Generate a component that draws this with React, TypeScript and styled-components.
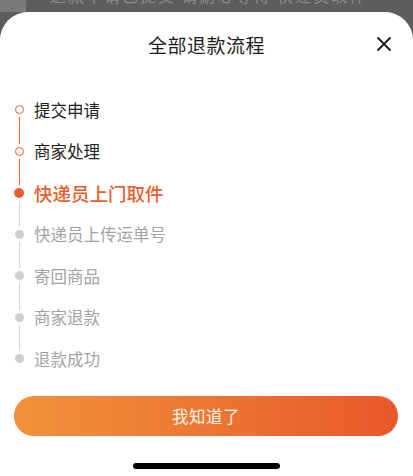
import React from "react";
import styled, { createGlobalStyle } from "styled-components";

const GlobalStyle = createGlobalStyle`
  html, body {
    margin: 0;
    padding: 0;
    background: #5d5d5d;
    font-family: "Noto Sans CJK SC", "Noto Sans", sans-serif;
  }
  #root {
    width: 413px;
    height: 476px;
    overflow: hidden;
  }
`;

const ORANGE = "#e8612c";
const GRAY_DOT = "#cfcfcf";
const GRAY_LINE = "#d6d6d6";

const Backdrop = styled.div`
  height: 12px;
  display: flex;
  overflow: hidden;
`;

const BackdropEdge = styled.div`
  width: 26px;
  background: #7a7a7a;
`;

const BackdropText = styled.div`
  flex: 1;
  margin-top: -14px;
  padding-left: 24px;
  font-size: 16px;
  line-height: 18px;
  color: #8c8c8c;
  letter-spacing: 2px;
  white-space: nowrap;
`;

const Sheet = styled.div`
  height: 464px;
  background: #fff;
  border-radius: 28px 28px 0 0;
  display: flex;
  flex-direction: column;
`;

const Header = styled.div`
  height: 64px;
  display: grid;
  grid-template-columns: 1fr auto 1fr;
  align-items: center;
`;

const Title = styled.div`
  grid-column: 2;
  font-size: 19px;
  color: #1c1c1c;
  letter-spacing: 0.5px;
`;

const CloseButton = styled.button`
  justify-self: end;
  margin-right: 21px;
  width: 16px;
  height: 16px;
  padding: 0;
  border: none;
  background: none;
  display: flex;
  align-items: center;
  justify-content: center;
`;

const Steps = styled.div`
  padding: 13px 0 0 14px;
  display: flex;
  flex-direction: column;
`;

const StepRow = styled.div`
  height: 41.5px;
  display: flex;
  align-items: stretch;
`;

const Rail = styled.div`
  width: 10px;
  display: flex;
  flex-direction: column;
  align-items: center;
`;

const Segment = styled.div<{ $color: string }>`
  flex: 1;
  width: 1px;
  background: ${({ $color }) => $color};
`;

const Dot = styled.div<{ $state: "done" | "active" | "todo" }>`
  box-sizing: border-box;
  flex: none;
  margin: 3px 0;
  border-radius: 50%;
  width: ${({ $state }) => ($state === "active" ? "10px" : "9px")};
  height: ${({ $state }) => ($state === "active" ? "10px" : "9px")};
  background: ${({ $state }) =>
    $state === "active" ? ORANGE : $state === "todo" ? GRAY_DOT : "#fff"};
  border: ${({ $state }) => ($state === "done" ? `1.4px solid ${ORANGE}` : "none")};
`;

const StepLabel = styled.div<{ $state: "done" | "active" | "todo" }>`
  margin-left: 10px;
  display: flex;
  align-items: center;
  white-space: nowrap;
  font-size: ${({ $state }) => ($state === "active" ? "18.5px" : "16.5px")};
  font-weight: ${({ $state }) => ($state === "active" ? 500 : 400)};
  color: ${({ $state }) =>
    $state === "active" ? ORANGE : $state === "todo" ? "#a3a3a3" : "#222"};
`;

const Footer = styled.div`
  padding: 16px 15px 0 14px;
`;

const ConfirmButton = styled.button`
  width: 100%;
  height: 40px;
  border: none;
  border-radius: 20px;
  background: linear-gradient(90deg, #f0923a 0%, #ec7733 50%, #e8582a 100%);
  color: #fff4e8;
  font-family: inherit;
  font-size: 16.5px;
  letter-spacing: 0.5px;
`;

const HomeBar = styled.div`
  margin: 27px auto 0;
  width: 147px;
  height: 6px;
  border-radius: 3px;
  background: #000;
`;

const steps = [
  "提交申请",
  "商家处理",
  "快递员上门取件",
  "快递员上传运单号",
  "寄回商品",
  "商家退款",
  "退款成功",
];

const activeIndex = 2;

export default function App() {
  return (
    <>
      <GlobalStyle />
      <Backdrop>
        <BackdropEdge />
        <BackdropText>退款申请已提交 请耐心等待 快递员取件</BackdropText>
      </Backdrop>
      <Sheet>
        <Header>
          <Title>全部退款流程</Title>
          <CloseButton aria-label="关闭">
            <svg width="14" height="14" viewBox="0 0 14 14">
              <path d="M1 1L13 13M13 1L1 13" stroke="#1a1a1a" strokeWidth="1.8" strokeLinecap="round" />
            </svg>
          </CloseButton>
        </Header>
        <Steps>
          {steps.map((label, i) => {
            const state = i < activeIndex ? "done" : i === activeIndex ? "active" : "todo";
            const topColor = i === 0 ? "transparent" : i <= activeIndex ? ORANGE : GRAY_LINE;
            const bottomColor =
              i === steps.length - 1 ? "transparent" : i + 1 <= activeIndex ? ORANGE : GRAY_LINE;
            return (
              <StepRow key={label}>
                <Rail>
                  <Segment $color={topColor} />
                  <Dot $state={state} />
                  <Segment $color={bottomColor} />
                </Rail>
                <StepLabel $state={state}>{label}</StepLabel>
              </StepRow>
            );
          })}
        </Steps>
        <Footer>
          <ConfirmButton>我知道了</ConfirmButton>
        </Footer>
        <HomeBar />
      </Sheet>
    </>
  );
}
